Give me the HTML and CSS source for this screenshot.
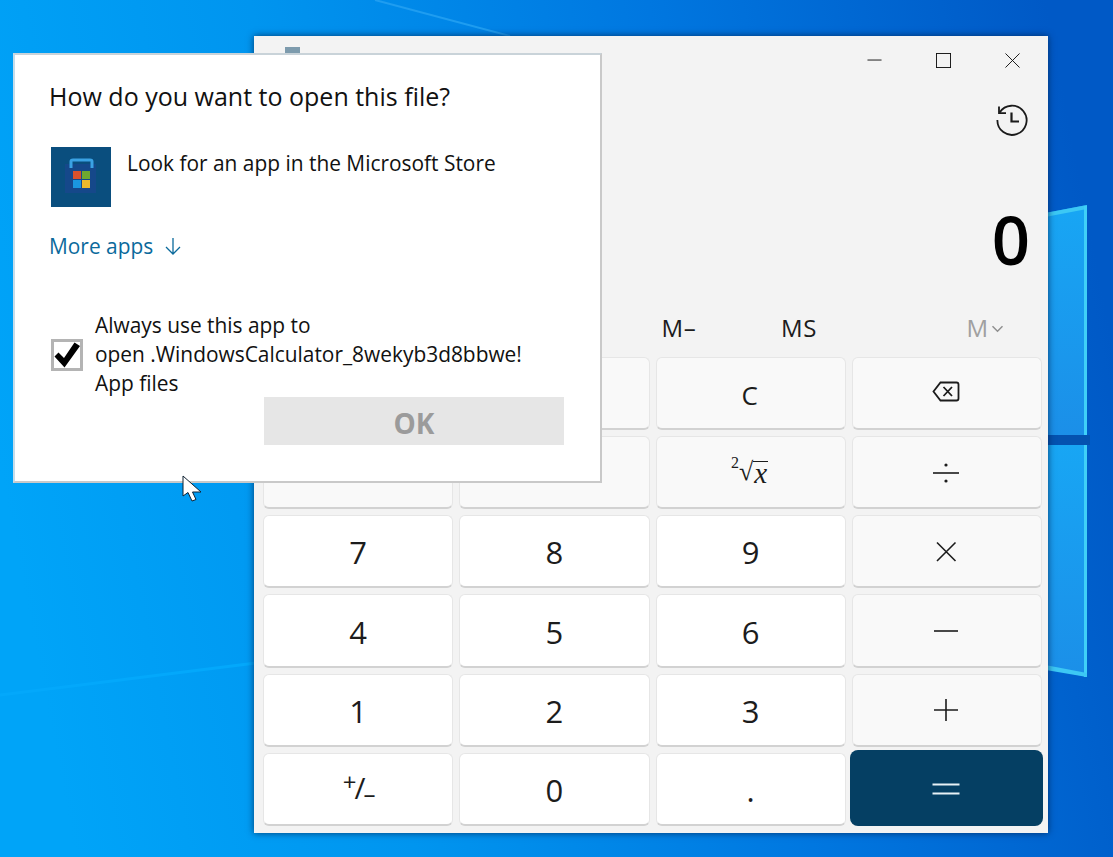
FILE: index.html
```html
<!DOCTYPE html>
<html lang="en">
<head>
<meta charset="utf-8">
<title>Calculator</title>
<link rel="stylesheet" href="styles.css">
</head>
<body>
<main class="desktop">
  <svg class="wallpaper" viewBox="0 0 1113 857" aria-hidden="true">
    <defs>
      <linearGradient id="wall" x1="0" y1="0.55" x2="1" y2="0.4">
        <stop offset="0" stop-color="#00a4f8"/>
        <stop offset="0.3" stop-color="#0095ef"/>
        <stop offset="0.65" stop-color="#0077e0"/>
        <stop offset="1" stop-color="#0059c6"/>
      </linearGradient>
      <linearGradient id="pane" x1="0" y1="0" x2="0" y2="1">
        <stop offset="0" stop-color="#18a6f4"/>
        <stop offset="1" stop-color="#1b8fe8"/>
      </linearGradient>
    </defs>
    <rect width="1113" height="857" fill="url(#wall)"/>
    <path d="M375 0 L510 36" stroke="#1f9df0" stroke-width="2" fill="none"/>
    <path d="M0 695 L256 663" stroke="#03a8fb" stroke-width="3" fill="none"/>
    <rect x="1040" y="435" width="50" height="10" fill="#0452b0"/>
    <polygon points="1040,214 1087,205 1087,435 1040,435" fill="url(#pane)"/>
    <polygon points="1040,445 1087,445 1087,677 1040,667" fill="url(#pane)"/>
    <polygon points="1040,214 1087,205 1087,209 1040,218" fill="#3cc8f4"/>
    <rect x="1084" y="206" width="3" height="229" fill="#3fd0f8"/>
    <rect x="1084" y="445" width="3" height="232" fill="#3fd0f8"/>
    <polygon points="1040,664 1087,673 1087,677 1040,669" fill="#3cc8f4"/>
  </svg>

  <section class="calc">
    <header class="titlebar">
      <span class="app-icon"></span>
      <span class="winbtn">
        <svg viewBox="0 0 16 16"><path d="M0.5 7.5H15.5"/></svg>
      </span>
      <span class="winbtn">
        <svg viewBox="0 0 16 16"><rect x="0.5" y="0.5" width="15" height="15"/></svg>
      </span>
      <span class="winbtn">
        <svg viewBox="0 0 16 16"><path d="M0.5 0.5L15.5 15.5M15.5 0.5L0.5 15.5"/></svg>
      </span>
    </header>
    <div class="history-row">
      <svg class="history" viewBox="0 0 32 32">
        <path d="M3.6 8.6A14.6 14.6 0 1 1 1.4 16"/>
        <path d="M3 2.5V9.2H10"/>
        <path class="thick" d="M15.5 8.5V17.5H23"/>
      </svg>
    </div>
    <div class="display">0</div>
    <div class="memory">
      <span class="mem mem-gap"></span>
      <span class="mem">M&#8211;</span>
      <span class="mem">MS</span>
      <span class="mem mem-list">M<svg viewBox="0 0 12 8"><path d="M1 1.2L6 6.2L11 1.2"/></svg></span>
    </div>
    <div class="keys">
      <button class="key op" aria-label="Percent"></button>
      <button class="key op" aria-label="Clear entry"></button>
      <button class="key op txt">C</button>
      <button class="key op">
        <svg class="ico back" viewBox="0 0 28 21"><path d="M8.5 1.5H24.5Q26.5 1.5 26.5 3.5V17.5Q26.5 19.5 24.5 19.5H8.5L1.5 10.5Z"/><path d="M11.5 6L20 15M20 6L11.5 15"/></svg>
      </button>
      <button class="key op" aria-label="Reciprocal"></button>
      <button class="key op" aria-label="Square"></button>
      <button class="key op root"><span class="index">2</span><span class="radical">&#8730;</span><i class="radicand">x</i></button>
      <button class="key op">
        <svg class="ico" viewBox="0 0 28 24"><path d="M1 12H27"/><circle cx="14" cy="4" r="1.6"/><circle cx="14" cy="20" r="1.6"/></svg>
      </button>
      <button class="key">7</button>
      <button class="key">8</button>
      <button class="key">9</button>
      <button class="key op">
        <svg class="ico" viewBox="0 0 28 24"><path d="M5 2.5L23.5 21M23.5 2.5L5 21"/></svg>
      </button>
      <button class="key">4</button>
      <button class="key">5</button>
      <button class="key">6</button>
      <button class="key op">
        <svg class="ico" viewBox="0 0 28 24"><path d="M2 12H26"/></svg>
      </button>
      <button class="key">1</button>
      <button class="key">2</button>
      <button class="key">3</button>
      <button class="key op">
        <svg class="ico" viewBox="0 0 28 24"><path d="M2 12H26M14 1V23"/></svg>
      </button>
      <button class="key sign"><span class="raised">+</span>/<span class="lowered">&#8211;</span></button>
      <button class="key">0</button>
      <button class="key">.</button>
      <button class="key equals">
        <svg class="ico" viewBox="0 0 28 24"><path d="M0.5 7.5H27.5M0.5 16.5H27.5"/></svg>
      </button>
    </div>
  </section>

  <section class="dialog">
    <h1 class="dlg-title">How do you want to open this file?</h1>
    <div class="store">
      <svg class="store-icon" viewBox="0 0 60 60">
        <rect width="60" height="60" fill="#0a4e7e"/>
        <rect x="14" y="17" width="31" height="29" fill="#15488a"/>
        <path d="M20 21V14.5Q20 13 22 13H39Q41 13 41 14.5V21" fill="none" stroke="#3aa2e4" stroke-width="3"/>
        <rect x="22" y="24" width="8" height="8" fill="#d9512c"/>
        <rect x="31" y="24" width="8" height="8" fill="#6fa82f"/>
        <rect x="22" y="33" width="8" height="8" fill="#1a97df"/>
        <rect x="31" y="33" width="8" height="8" fill="#e9b92d"/>
      </svg>
      <span class="store-text">Look for an app in the Microsoft Store</span>
    </div>
    <a class="more">More apps
      <svg viewBox="0 0 18 18"><path d="M9 1V17M2 10L9 17L16 10"/></svg>
    </a>
    <div class="always">
      <span class="check">
        <svg viewBox="0 0 26 26"><path d="M0.5 14.5L4.5 10.5L10 16L20.5 0.5L26 4L10.5 25.5Z"/></svg>
      </span>
      <p class="always-text">Always use this app to<br>open .WindowsCalculator_8wekyb3d8bbwe!<br>App files</p>
    </div>
    <button class="ok">OK</button>
  </section>

  <svg class="cursor" viewBox="0 0 20 28" aria-hidden="true">
    <path d="M1 1V21L6 17.5L10 26L14 24.5L10.5 17H19Z"/>
  </svg>
</main>
</body>
</html>
```
FILE: styles.css
```css
* { box-sizing: border-box; }
html, body { margin: 0; height: 100%; overflow: hidden; }
body { font-family: "Open Sans", "Noto Sans", sans-serif; color: #1a1a1a; }

.desktop { position: relative; width: 1113px; height: 857px; overflow: hidden; }
.wallpaper { position: absolute; inset: 0; width: 100%; height: 100%; display: block; }

/* Calculator window */
.calc {
  position: absolute; left: 254px; top: 36px; width: 794px; height: 797px;
  display: flex; flex-direction: column;
  background: #f3f3f3;
  box-shadow: 0 0 7px rgba(0, 30, 70, .75);
}
.titlebar { display: flex; align-items: center; height: 48px; flex: none; }
.app-icon { align-self: flex-start; width: 15px; height: 16px; margin: 11px auto 0 31px; background: #7d9bad; }
.winbtn { width: 69px; height: 48px; display: flex; align-items: center; justify-content: center; }
.winbtn:last-child { margin-right: 1px; }
.winbtn svg { width: 15px; height: 15px; fill: none; stroke: #111; stroke-width: 1; overflow: visible; }

.history-row { display: flex; justify-content: flex-end; height: 72px; flex: none; padding: 20px 20px 0 0; }
.history { width: 32px; height: 32px; fill: none; stroke: #1a1a1a; stroke-width: 1.8; overflow: visible; }
.history .thick { stroke-width: 2.2; }

.display {
  flex: none; height: 90px; margin-top: 38px; padding-right: 18px;
  text-align: right; font-size: 67px; line-height: 90px; font-weight: 600; color: #000;
}
.memory { flex: none; display: flex; height: 59px; margin-top: 14px; padding: 0 6px 0 5px; align-items: center; }
.mem { width: 120px; text-align: center; font-size: 24px; line-height: 30px; letter-spacing: .6px; color: #1c1c1c; }
.mem-gap { width: 360px; }
.mem-list { width: 114px; margin-left: auto; color: #a0a0a0; display: flex; align-items: center; justify-content: center; }
.mem-list svg { width: 13px; height: 8px; margin-left: 2px; margin-top: 2px; fill: none; stroke: #8f8f8f; stroke-width: 1.5; }

.keys {
  flex: 1; min-height: 0;
  display: grid; grid-template-columns: repeat(4, 1fr); grid-template-rows: repeat(6, 1fr);
  gap: 6px; padding: 0 6px 7px 9px;
}
.key {
  display: flex; align-items: center; justify-content: center;
  font-family: inherit; font-size: 31px; color: #1c1c1c; padding: 2px 0 0;
  background: #fff;
  border: 1px solid #e6e6e6; border-bottom: 2px solid #d2d2d2; border-radius: 6px;
}
.key.op { background: #f9f9f9; font-size: 26px; padding-top: 1px; }
.key.txt { padding: 4px 2px 0 0; }
.ico { width: 28px; height: 24px; margin-right: 2px; fill: none; stroke: #1c1c1c; stroke-width: 1.6; }
.ico circle { fill: #1c1c1c; stroke: none; }
.ico.back { width: 28px; height: 21px; margin-bottom: 4px; stroke-width: 1.8; }
.key.root { font-family: "Liberation Serif", serif; line-height: 1; font-size: 26px; padding: 0 2px 0 0; }
.index { font-size: 16px; position: relative; top: -9px; }
.radicand { font-size: 29px; border-top: 1px solid #1c1c1c; line-height: 22px; padding: 0 1px; }
.key.sign { font-size: 30px; padding-bottom: 4px; letter-spacing: -2px; }
.raised { font-size: 24px; position: relative; top: -6px; }
.lowered { font-size: 24px; position: relative; top: 6px; }
.key.equals { background: #053f63; border: 0; margin: -3px -1px 0 -2px; border-radius: 8px; }
.equals .ico { margin: 0; stroke: #e8f1f6; stroke-width: 2; }

/* Dialog */
.dialog {
  position: absolute; left: 13px; top: 53px; width: 589px; height: 430px;
  display: flex; flex-direction: column; align-items: flex-start;
  background: #fff; border: 2px solid #c9c9c9; border-left-color: #c4dcea; border-top-color: #c9d3d9;
  padding: 24px 36px 0 34px;
}
.dlg-title { margin: 0; font-size: 25px; line-height: 34px; font-weight: 400; color: #111; }
.store { display: flex; margin: 34px 0 0 2px; gap: 16px; color: #111; }
.store-icon { width: 60px; height: 60px; flex: none; }
.store-text { font-size: 20.9px; line-height: 33px; }
.more { margin-top: 25px; display: flex; align-items: center; gap: 11px; font-size: 20.9px; line-height: 28px; color: #0b6a9c; }
.more svg { width: 18px; height: 18px; fill: none; stroke: #0b6a9c; stroke-width: 1.3; }
.always { display: flex; align-items: center; gap: 12px; margin: 51px 0 0 2px; }
.check { width: 32px; height: 32px; flex: none; border: 3px solid #b4b4b4; display: flex; align-items: center; justify-content: center; }
.check svg { width: 26px; height: 26px; fill: #000; overflow: visible; }
.always-text { margin: 0; font-size: 20.9px; line-height: 29px; color: #111; white-space: nowrap; }
.ok {
  align-self: flex-end; width: 300px; height: 48px; margin-top: -1px; border: 0; padding: 3px 0 0;
  background: #e6e6e6; color: #9b9b9b; font-family: inherit; font-size: 28px; font-weight: 700;
}

.cursor { position: absolute; left: 182px; top: 475px; width: 20px; height: 28px; fill: #fff; stroke: #123; stroke-width: 1; }
```
